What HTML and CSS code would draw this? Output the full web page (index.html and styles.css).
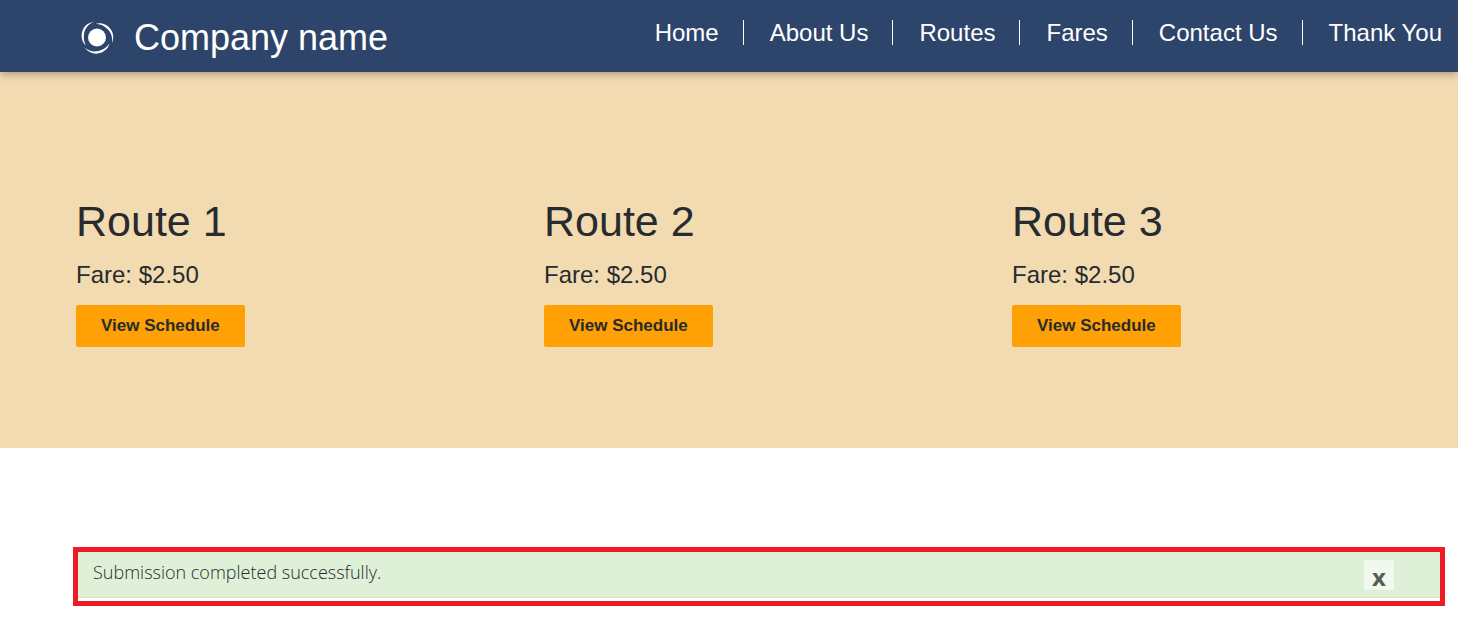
FILE: index.html
```html
<!DOCTYPE html>
<html lang="en">
<head>
<meta charset="utf-8">
<meta name="viewport" content="width=device-width, initial-scale=1">
<title>Company name</title>
<link rel="stylesheet" href="styles.css">
</head>
<body>
<header class="header">
  <a class="brand" href="#">
    <svg class="brand-logo" viewBox="0 0 42 42" fill="#fff" aria-hidden="true">
      <defs>
        <path id="blade" d="M18.500 5.600C10.500 6.800 5.600 12.500 5.600 20C5.600 23.500 7 27 9.800 29.500C8.200 26 7.600 23 7.900 19.500C8.400 13 12 8.200 18.500 5.600Z"/>
      </defs>
      <circle cx="21" cy="21.500" r="9"/>
      <use href="#blade"/>
      <use href="#blade" transform="rotate(120 21 21.500)"/>
      <use href="#blade" transform="rotate(240 21 21.500)"/>
    </svg>
    <span>Company name</span>
  </a>
  <nav class="nav">
    <a href="#">Home</a>
    <a href="#">About Us</a>
    <a href="#">Routes</a>
    <a href="#">Fares</a>
    <a href="#">Contact Us</a>
    <a href="#">Thank You</a>
  </nav>
</header>
<main>
  <section class="routes">
    <article class="route">
      <h2>Route 1</h2>
      <p>Fare: $2.50</p>
      <button class="schedule" type="button">View Schedule</button>
    </article>
    <article class="route">
      <h2>Route 2</h2>
      <p>Fare: $2.50</p>
      <button class="schedule" type="button">View Schedule</button>
    </article>
    <article class="route">
      <h2>Route 3</h2>
      <p>Fare: $2.50</p>
      <button class="schedule" type="button">View Schedule</button>
    </article>
  </section>
  <div class="notice">
    <div class="alert" role="status">
      <p>Submission completed successfully.</p>
      <button class="close" type="button" aria-label="Close">x</button>
    </div>
  </div>
</main>
</body>
</html>
```
FILE: styles.css
```css
* {
  box-sizing: border-box;
}

body {
  margin: 0;
  background: #fff;
  color: #272b2d;
  font-family: "Liberation Sans", Arial, sans-serif;
}

h2,
p {
  margin: 0;
}

.header {
  position: relative;
  display: flex;
  justify-content: space-between;
  align-items: flex-start;
  padding: 16px 16px 12px 76px;
  background: #2e456b;
  box-shadow: 0 2px 8px rgba(0, 0, 0, 0.3);
}

.brand {
  display: flex;
  align-items: flex-start;
  gap: 16px;
  color: #fff;
  font-size: 36px;
  line-height: 44px;
  text-decoration: none;
}

.brand-logo {
  width: 42px;
  height: 42px;
}

.nav {
  display: flex;
  padding-top: 4px;
}

.nav a {
  color: #fff;
  font-size: 24px;
  line-height: 25px;
  text-decoration: none;
  white-space: nowrap;
}

.nav a + a {
  margin-left: 24px;
  padding-left: 26px;
  border-left: 1px solid #fff;
}

.routes {
  display: grid;
  grid-template-columns: repeat(3, 1fr);
  gap: 30px;
  padding: 124px 8px 101px 76px;
  background: #f2dab1;
}

.route h2 {
  font-size: 43px;
  font-weight: 400;
  line-height: 50px;
}

.route p {
  margin-top: 14px;
  font-size: 24px;
  line-height: 30px;
}

.schedule {
  display: block;
  margin-top: 15px;
  padding: 0 25px;
  border: 0;
  border-radius: 2px;
  background: #ffa005;
  color: #272b2d;
  font-family: inherit;
  font-size: 17px;
  font-weight: 700;
  line-height: 42px;
}

.notice {
  margin: 99px 13px 37px 73px;
  padding-bottom: 3px;
  border: 5px solid #ed1c24;
}

.alert {
  display: flex;
  justify-content: space-between;
  padding: 8px 46px 7px 15px;
  border-bottom: 1px solid #d3e6c5;
  background: #dff0d8;
}

.alert p {
  font-family: "Open Sans", "Noto Sans", sans-serif;
  font-size: 18px;
  font-weight: 300;
  line-height: 24px;
}

.close {
  width: 30px;
  height: 30px;
  padding: 3px 0 0;
  border: 0;
  background: #f1f8ee;
  color: #575f53;
  font-family: "Open Sans", "Noto Sans", sans-serif;
  font-size: 24px;
  font-weight: 700;
  line-height: 24px;
}
```
